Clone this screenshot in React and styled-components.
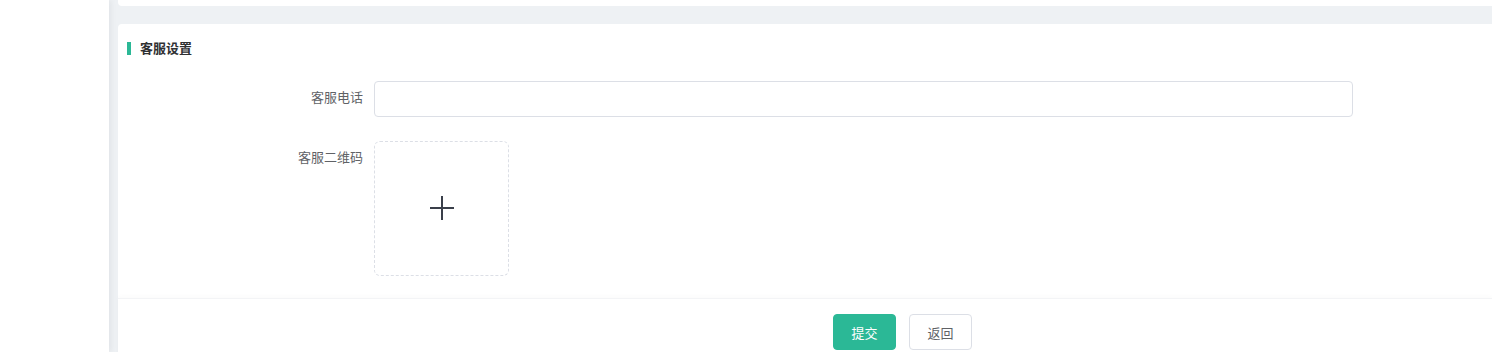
import React from "react";
import styled, { createGlobalStyle } from "styled-components";

const GlobalStyle = createGlobalStyle`
  html, body {
    margin: 0;
    padding: 0;
    background: #eef1f4;
    font-family: "Noto Sans CJK SC", "Noto Sans", "Liberation Sans", sans-serif;
  }
  * {
    box-sizing: border-box;
  }
`;

const App = () => {
  return (
    <Layout>
      <GlobalStyle />
      <Sidebar />
      <Main>
        <TopCard />
        <FormCard>
          <SectionTitle>客服设置</SectionTitle>
          <FormBody>
            <FormRow>
              <Label>客服电话</Label>
              <Input type="text" />
            </FormRow>
            <FormRow>
              <Label>客服二维码</Label>
              <Upload>
                <svg width="24" height="24" viewBox="0 0 24 24">
                  <line x1="0" y1="12" x2="24" y2="12" stroke="#3a3f4a" strokeWidth="2" />
                  <line x1="12" y1="0" x2="12" y2="24" stroke="#3a3f4a" strokeWidth="2" />
                </svg>
              </Upload>
            </FormRow>
          </FormBody>
          <Footer>
            <Button primary>提交</Button>
            <Button>返回</Button>
          </Footer>
        </FormCard>
      </Main>
    </Layout>
  );
};
export default App;

const Layout = styled.div`
  display: flex;
  width: 100%;
  height: 352px;
  overflow: hidden;
  background: #eef1f4;
`;

const Sidebar = styled.aside`
  width: 109px;
  flex-shrink: 0;
  background: #ffffff;
  box-shadow: 2px 0 6px rgba(0, 21, 41, 0.06);
  position: relative;
  z-index: 1;
`;

const Main = styled.main`
  flex: 1;
  padding-left: 9px;
  display: flex;
  flex-direction: column;
  min-width: 0;
`;

const TopCard = styled.div`
  height: 6px;
  flex-shrink: 0;
  background: #ffffff;
  border-radius: 0 0 0 4px;
`;

const FormCard = styled.section`
  margin-top: 18px;
  background: #ffffff;
  border-radius: 4px 0 0 0;
  flex: 1 0 auto;
  display: flex;
  flex-direction: column;
`;

const SectionTitle = styled.h3`
  margin: 0;
  padding: 16px 0 0 22px;
  height: 57px;
  position: relative;
  font-size: 13px;
  font-weight: bold;
  line-height: 16px;
  color: #303133;

  &::before {
    content: "";
    position: absolute;
    left: 9px;
    top: 18px;
    width: 4px;
    height: 13px;
    background: #2bb896;
  }
`;

const FormBody = styled.div`
  display: flex;
  flex-direction: column;
  gap: 24px;
  padding-bottom: 22px;
`;

const FormRow = styled.div`
  display: flex;
  align-items: flex-start;
`;

const Label = styled.label`
  width: 256px;
  padding-right: 11px;
  text-align: right;
  font-size: 13px;
  line-height: 32px;
  color: #606266;
`;

const Input = styled.input`
  width: 979px;
  height: 36px;
  border: 1px solid #dcdfe6;
  border-radius: 4px;
  outline: none;
  padding: 0 15px;
  font-size: 13px;
`;

const Upload = styled.div`
  width: 135px;
  height: 135px;
  border: 1px dashed #dcdfe6;
  border-radius: 6px;
  display: flex;
  align-items: center;
  justify-content: center;
  padding-left: 1px;
  padding-bottom: 1px;
`;

const Footer = styled.footer`
  display: flex;
  gap: 13px;
  padding: 15px 0 16px 715px;
  border-top: 1px solid #f3f4f6;
  box-shadow: 0 -2px 4px rgba(0, 0, 0, 0.02);
`;

const Button = styled.button`
  width: 63px;
  height: 36px;
  border-radius: 4px;
  font-family: inherit;
  font-size: 13px;
  cursor: pointer;
  border: 1px solid ${(p) => (p.primary ? "#2bb896" : "#dcdfe6")};
  background: ${(p) => (p.primary ? "#2bb896" : "#ffffff")};
  color: ${(p) => (p.primary ? "#ffffff" : "#606266")};
`;
